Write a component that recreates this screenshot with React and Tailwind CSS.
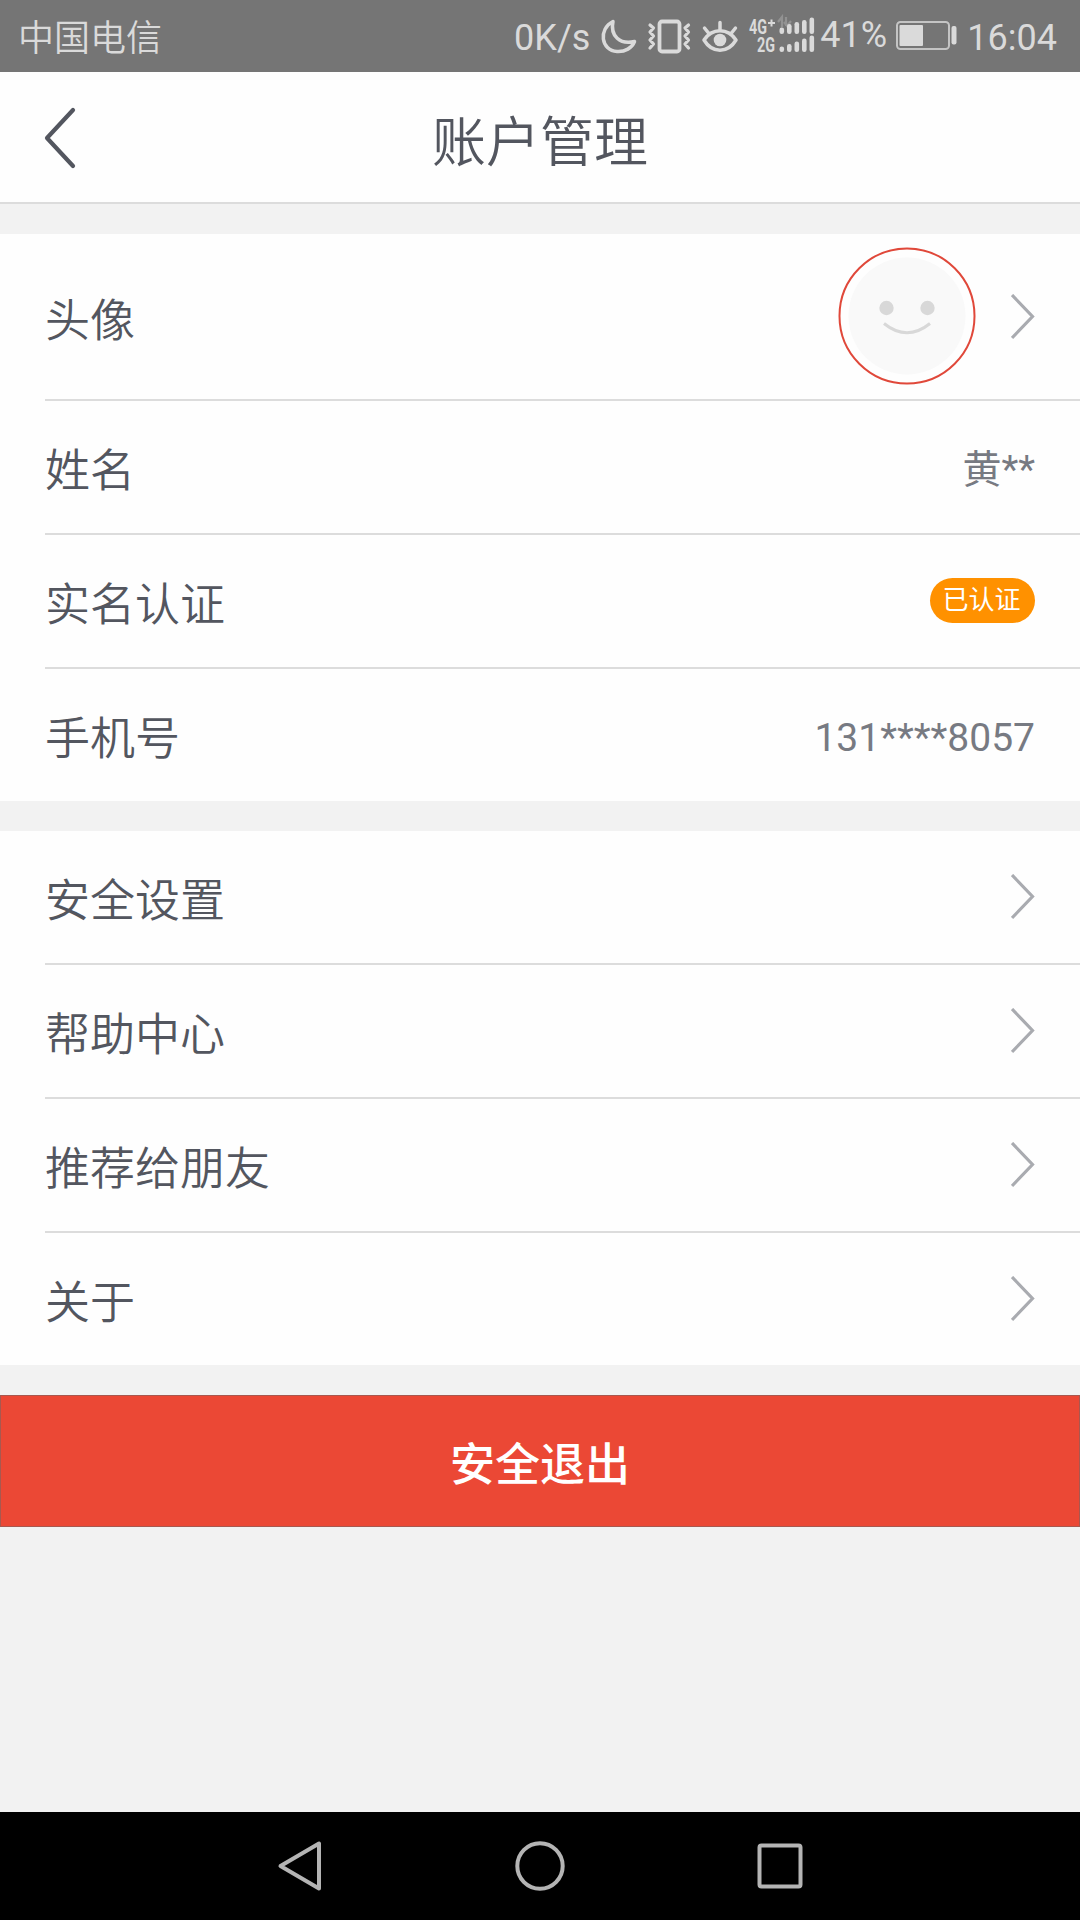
import React from "react";

const profileRows = [
  { label: "头像", type: "avatar" },
  { label: "姓名", type: "text", value: "黄**" },
  { label: "实名认证", type: "badge", value: "已认证" },
  { label: "手机号", type: "text", value: "131****8057" },
];

const settingRows = [
  { label: "安全设置", type: "link" },
  { label: "帮助中心", type: "link" },
  { label: "推荐给朋友", type: "link" },
  { label: "关于", type: "link" },
];

// bar tops for the two sim cards
const signalBars = [
  { bottom: 34, tops: [27.5, 24, 22, 20, 17.5] },
  { bottom: 52, tops: [46.5, 44, 41.5, 38.5, 35.5] },
];

const Chevron = () => (
  <svg width="24" height="46" viewBox="0 0 24 46" fill="none" className="shrink-0">
    <path d="M1 1 L21.500 22.500 L1 44" stroke="#a9abb0" strokeWidth="3.200" />
  </svg>
);

const Avatar = () => (
  <svg width="138" height="138" viewBox="0 0 138 138" fill="none" className="mb-[2px] mr-[35px]">
    <circle cx="69" cy="69" r="67.500" stroke="#e0483a" strokeWidth="2" />
    <circle cx="69" cy="69" r="58.500" fill="#f9f9f9" />
    <circle cx="48.500" cy="61" r="7.200" fill="#d8d8d8" />
    <circle cx="89.500" cy="61" r="7.200" fill="#d8d8d8" />
    <path d="M46 76.500 Q69 95 92 76.500" stroke="#d8d8d8" strokeWidth="3" />
  </svg>
);

const StatusBar = () => (
  <div className="flex h-[72px] items-start bg-[#757575] text-[36px] leading-[42px] text-[#dadada]">
    <div className="ml-[18px] mt-[18px] font-[350]">中国电信</div>
    <div className="ml-auto mt-[17px]">0K/s</div>
    <svg width="228" height="72" viewBox="598 0 228 72" fill="none" className="ml-[8px] shrink-0">
      {/* moon */}
      <path
        d="M613 21.500 C598 29 601 50.500 617 51.500 C625 52 632 48 634.500 41.500 C620 45 610 36 613 21.500 Z"
        stroke="#dadada"
        strokeWidth="3.500"
        strokeLinejoin="round"
      />
      {/* vibrate */}
      <rect x="659.500" y="21.500" width="20" height="30" rx="2.500" stroke="#dadada" strokeWidth="3.800" />
      <path
        d="M650 25 L653.500 28 L650 32 L653.500 36 L650 40 L653.500 44 L650 48 M688.500 25 L685 28 L688.500 32 L685 36 L688.500 40 L685 44 L688.500 48"
        stroke="#dadada"
        strokeWidth="3.200"
        strokeLinecap="round"
        strokeLinejoin="round"
      />
      {/* eye */}
      <path
        d="M704 40 C712 27.500 728 27.500 736 40 C728 53.500 712 53.500 704 40 Z M720 29 V22.500 M708.500 33 L704.500 28 M731.500 33 L735.500 28"
        stroke="#dadada"
        strokeWidth="3.500"
        strokeLinecap="round"
        strokeLinejoin="round"
      />
      <circle cx="720" cy="40" r="6.300" fill="#dadada" />
      {/* network */}
      <text x="749" y="34" fill="#dadada" fontSize="20" fontWeight="700" textLength="18" lengthAdjust="spacingAndGlyphs">4G</text>
      <path d="M771.500 19.500 V26.500 M768 23 H775" stroke="#dadada" strokeWidth="2" />
      <text x="757" y="52" fill="#dadada" fontSize="20" fontWeight="700" textLength="18" lengthAdjust="spacingAndGlyphs">2G</text>
      <path d="M778 22 L782 17 V27 M786 26 V17 M784 22 L787 26 L791 21" stroke="#929292" strokeWidth="2.200" />
      {signalBars.map((row) =>
        row.tops.map((top, i) => (
          <rect key={top} x={779.5 + i * 7.5} y={top} width="4.600" height={row.bottom - top} rx="2.200" fill="#dadada" />
        ))
      )}
    </svg>
    <div className="-ml-[6px] mt-[14px] w-[67px] whitespace-nowrap">41%</div>
    <svg width="62" height="72" viewBox="896 0 62 72" fill="none" className="ml-[9px] shrink-0">
      <rect x="897" y="22" width="52" height="27" rx="3.500" stroke="#c4c4c4" strokeWidth="2" />
      <rect x="899.500" y="25" width="23.500" height="21" rx="1" fill="#dadada" />
      <rect x="951.500" y="26" width="5" height="18.500" rx="2" fill="#dadada" />
    </svg>
    <div className="ml-[9px] mr-[23px] mt-[17px]">16:04</div>
  </div>
);

const Header = () => (
  <div className="grid h-[132px] grid-cols-[1fr_auto_1fr] items-center border-b-2 border-[#dcdcdc] bg-[#fefefe]">
    <button type="button" className="ml-[43px] mt-[1px] w-[34px]">
      <svg width="34" height="62" viewBox="0 0 34 62" fill="none">
        <path d="M30 3 L4 31 L30 59" stroke="#53565f" strokeWidth="4.200" strokeLinecap="round" strokeLinejoin="round" />
      </svg>
    </button>
    <h1 className="pt-[13px] text-[54px] font-[350] leading-[64px] text-[#53565f]">账户管理</h1>
  </div>
);

const Row = ({ item, last }) => (
  <div className={last ? "ml-[45px]" : "ml-[45px] border-b-2 border-[#dcdcdc]"}>
    <div className={`flex items-center pr-[45px] ${item.type === "avatar" ? "h-[165px]" : "h-[132px]"}`}>
      <span className="mt-[10px] flex-1 text-[45px] font-[350] leading-[54px] text-[#53565f]">{item.label}</span>
      {item.type === "avatar" && <Avatar />}
      {item.type === "text" && (
        <span className="mt-[5px] text-[39px] leading-[48px] text-[#777a82]">{item.value}</span>
      )}
      {item.type === "badge" && (
        <span className="mb-[2px] flex h-[45px] w-[105px] items-center justify-center rounded-full bg-[#ff9100] pr-[2px] text-[26px] leading-none text-white">
          {item.value}
        </span>
      )}
      {(item.type === "avatar" || item.type === "link") && <Chevron />}
    </div>
  </div>
);

const RowGroup = ({ rows }) => (
  <div className="mt-[30px] bg-[#fefefe]">
    {rows.map((item, index) => (
      <Row key={item.label} item={item} last={index === rows.length - 1} />
    ))}
  </div>
);

const NavBar = () => (
  <div className="mt-auto flex h-[108px] items-center justify-center gap-[190px] bg-black">
    <svg width="50" height="52" viewBox="0 0 50 52" fill="none">
      <path d="M44 3.500 V48.500 L5.500 26 Z" stroke="#b4b4b4" strokeWidth="4" strokeLinejoin="round" />
    </svg>
    <svg width="50" height="52" viewBox="0 0 50 52" fill="none">
      <circle cx="25" cy="26" r="22.700" stroke="#b4b4b4" strokeWidth="4" />
    </svg>
    <svg width="50" height="52" viewBox="0 0 50 52" fill="none">
      <rect x="4.500" y="5.500" width="41" height="41" rx="2" stroke="#b4b4b4" strokeWidth="4" />
    </svg>
  </div>
);

const App = () => {
  return (
    <div className="flex h-[1920px] w-[1080px] flex-col overflow-hidden bg-[#f2f2f2] font-[Roboto,'Noto_Sans_CJK_SC',sans-serif]">
      <StatusBar />
      <Header />
      <RowGroup rows={profileRows} />
      <RowGroup rows={settingRows} />
      <button
        type="button"
        className="mt-[30px] h-[132px] w-full border border-[#a8584f] bg-[#eb4835] pt-[9px] text-[45px] font-medium text-white"
      >
        安全退出
      </button>
      <NavBar />
    </div>
  );
};

export default App;
